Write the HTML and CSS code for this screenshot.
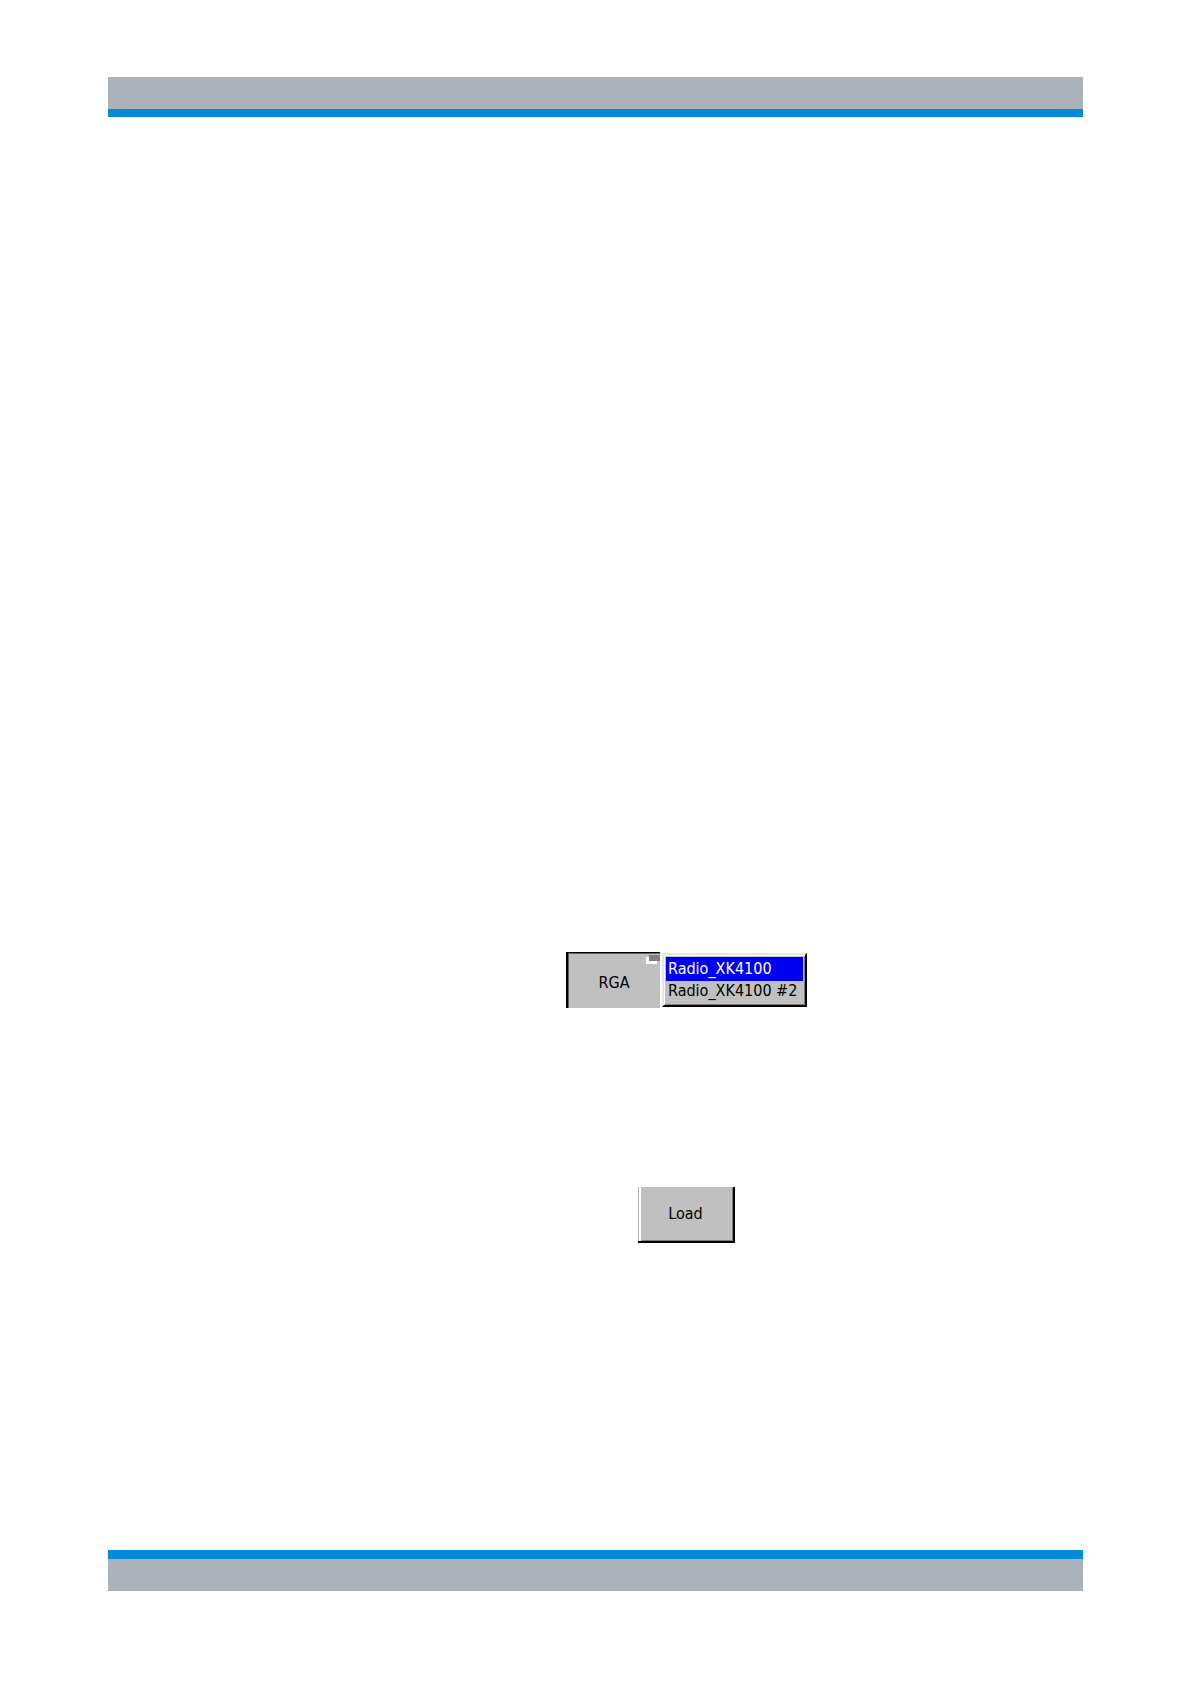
FILE: index.html
```html
<!DOCTYPE html>
<html lang="en">
<head>
  <meta charset="UTF-8" />
  <meta name="viewport" content="width=device-width, initial-scale=1" />
  <title>RGA Softkeys</title>
  <link rel="stylesheet" href="styles.css">
</head>
<body>
  <div class="page">
    <header class="bar bar-top"></header>

    <main class="content">
      <div class="softkey-row">
        <button type="button" class="softkey pressed" aria-haspopup="menu" aria-expanded="true">
          RGA
          <span class="submenu-mark"></span>
        </button>
        <div class="menu" role="menu">
          <button type="button" class="menu-item selected" role="menuitem">Radio_XK4100</button>
          <button type="button" class="menu-item" role="menuitem">Radio_XK4100 #2</button>
        </div>
      </div>

      <button type="button" class="softkey raised">Load</button>
    </main>

    <footer class="bar bar-bottom"></footer>
  </div>
</body>
</html>
```
FILE: styles.css
```css
* {
  box-sizing: border-box;
}

body {
  margin: 0;
  background: #fff;
  font-family: "DejaVu Sans Condensed", "DejaVu Sans", sans-serif;
  color: #000;
}

.page {
  display: flex;
  flex-direction: column;
  min-height: 100vh;
  padding: 77px 107px 93px 108px;
}

/* Page header and footer stripes */
.bar {
  height: 40px;
  background: #abb2b9;
}

.bar-top {
  border-bottom: 8px solid #048ad8;
}

.bar-bottom {
  height: 41px;
  border-top: 9px solid #048ad8;
}

.content {
  flex: 1;
  display: flex;
  flex-direction: column;
  align-items: center;
  justify-content: flex-end;
  gap: 179px;
  padding: 0 0 307px 182px;
}

.softkey-row {
  display: flex;
  align-items: center;
  gap: 2px;
}

.softkey,
.menu-item {
  font-family: inherit;
  font-size: 16px;
  line-height: 20px;
  color: #000;
  cursor: pointer;
}

.softkey {
  position: relative;
  height: 56px;
  padding: 0;
  background: #c0c0c0;
}

.pressed {
  width: 94px;
  padding-top: 4px;
  border: solid #000;
  border-width: 1px 0 0 2px;
  box-shadow: inset 1px 1px #606060;
}

.raised {
  width: 97px;
  border: solid #000;
  border-width: 0 2px 2px 0;
  box-shadow: inset 1px 0 #b0b0b0, inset 3px 0 #fff, inset -1px -1px #808080;
}

/* Shows that the softkey opens a submenu */
.submenu-mark {
  position: absolute;
  top: 4px;
  right: 3px;
  width: 11px;
  height: 7px;
  background: #fff;
}

.submenu-mark::after {
  content: "";
  position: absolute;
  top: -2px;
  right: -3px;
  width: 11px;
  height: 6px;
  background: #808080;
}

.menu {
  display: flex;
  flex-direction: column;
  width: 145px;
  height: 54px;
  padding: 2px 2px 3px 2px;
  background: #c0c0c0;
  border: solid;
  border-width: 2px 2px 2px 2px;
  border-color: #e4e4e4 #000 #000 #e4e4e4;
  box-shadow: inset 1px 1px #fff, inset -1px -1px #808080;
}

.menu-item {
  height: 20px;
  padding: 0 0 0 2px;
  border: 0;
  background: none;
  text-align: left;
  white-space: nowrap;
}

.menu-item.selected {
  height: 24px;
  background: #0000f0;
  color: #fff;
}
```
